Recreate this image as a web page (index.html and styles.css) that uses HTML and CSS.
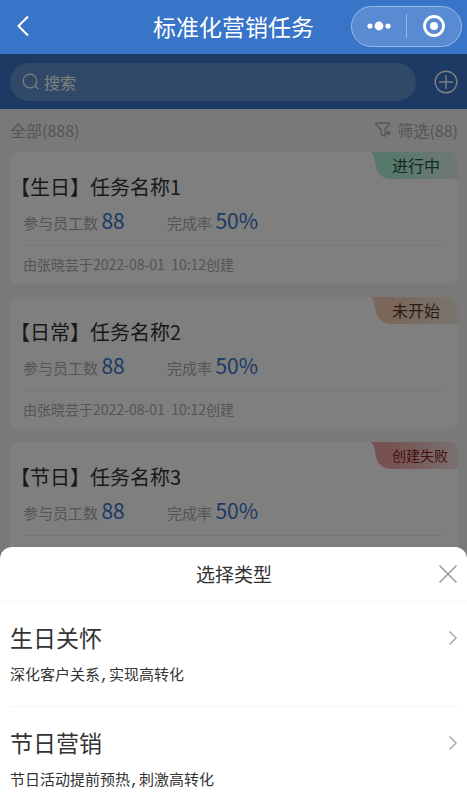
FILE: index.html
```html
<!DOCTYPE html>
<html lang="zh-CN">
<head>
<meta charset="utf-8">
<meta name="viewport" content="width=device-width, initial-scale=1">
<title>标准化营销任务</title>
<link rel="stylesheet" href="styles.css">
</head>
<body>
<header class="navbar">
  <button class="icon-btn back" type="button" aria-label="返回">
    <svg width="14" height="22" viewBox="0 0 14 22"><path d="M12 1.5 2.5 11 12 20.500" fill="none" stroke="#fff" stroke-width="2"/></svg>
  </button>
  <h1 class="navbar-title">标准化营销任务</h1>
  <div class="capsule">
    <button class="icon-btn capsule-btn" type="button" aria-label="更多">
      <svg width="24" height="10" viewBox="0 0 24 10" fill="#fff"><circle cx="3" cy="5" r="2.600"/><circle cx="12" cy="5" r="4.400"/><circle cx="21" cy="5" r="2.600"/></svg>
    </button>
    <span class="capsule-line"></span>
    <button class="icon-btn capsule-btn" type="button" aria-label="关闭小程序">
      <svg width="24" height="24" viewBox="0 0 24 24"><circle cx="12" cy="12" r="9.500" fill="none" stroke="#fff" stroke-width="2.800"/><circle cx="12" cy="12" r="4" fill="#fff"/></svg>
    </button>
  </div>
</header>
<div class="screen">
  <main class="page">
    <div class="search-bar">
      <label class="search-field">
        <svg width="18" height="18" viewBox="0 0 18 18" fill="none" stroke="#fff" stroke-width="1.200"><circle cx="8" cy="8" r="6.800"/><path d="m13 13 3.500 3"/></svg>
        <input class="search-input" type="search" placeholder="搜索" aria-label="搜索">
      </label>
      <button class="icon-btn" type="button" aria-label="新建任务">
        <svg width="24" height="24" viewBox="0 0 24 24" fill="none" stroke="#fff" stroke-width="1.400"><circle cx="12" cy="12" r="10.800"/><path d="M12 5v14M5 12h14"/></svg>
      </button>
    </div>
    <div class="filter-bar">
      <span>全部(888)</span>
      <button class="filter-btn" type="button">
        <svg width="16" height="16" viewBox="0 0 16 16" fill="none" stroke="#aaa" stroke-width="1.300"><path d="M10 14.500 6 12.300V7.500L1 2.500V1h13.500v1.500L10 7v7.500"/><path d="M11 11h4.500M12 9.200l2.800 3.600M14.800 9.200 12 12.800"/></svg>
        筛选(88)
      </button>
    </div>
    <ul class="task-list">
      <li class="task">
        <span class="badge badge-active"><svg class="badge-edge" width="22" height="27" viewBox="0 0 22 27"><path d="M0 0h22v27C11 27 6.500 20 5.500 13S4 1.500 0 0Z" fill="#aff0d8"/></svg><span class="badge-text">进行中</span></span>
        <h2 class="task-name">【生日】任务名称1</h2>
        <div class="stats"><span class="stat">参与员工数 <b class="num">88</b></span><span class="stat">完成率 <b class="num">50%</b></span></div>
        <p class="meta">由张晓芸于2022-08-01&nbsp; 10:12创建</p>
      </li>
      <li class="task">
        <span class="badge badge-pending"><svg class="badge-edge" width="22" height="27" viewBox="0 0 22 27"><path d="M0 0h22v27C11 27 6.500 20 5.500 13S4 1.500 0 0Z" fill="#f5cfb5"/></svg><span class="badge-text">未开始</span></span>
        <h2 class="task-name">【日常】任务名称2</h2>
        <div class="stats"><span class="stat">参与员工数 <b class="num">88</b></span><span class="stat">完成率 <b class="num">50%</b></span></div>
        <p class="meta">由张晓芸于2022-08-01&nbsp; 10:12创建</p>
      </li>
      <li class="task">
        <span class="badge badge-failed"><svg class="badge-edge" width="22" height="27" viewBox="0 0 22 27"><path d="M0 0h22v27C11 27 6.500 20 5.500 13S4 1.500 0 0Z" fill="#f0a5a5"/></svg><span class="badge-text">创建失败</span></span>
        <h2 class="task-name">【节日】任务名称3</h2>
        <div class="stats"><span class="stat">参与员工数 <b class="num">88</b></span><span class="stat">完成率 <b class="num">50%</b></span></div>
      </li>
    </ul>
  </main>
  <div class="mask"></div>
  <section class="sheet" role="dialog" aria-labelledby="sheet-title">
    <header class="sheet-head">
      <h2 class="sheet-title" id="sheet-title">选择类型</h2>
      <button class="icon-btn sheet-close" type="button" aria-label="关闭">
        <svg width="20" height="20" viewBox="0 0 20 20"><path d="m1.500 1.500 17 17M18.500 1.500l-17 17" stroke="#999" stroke-width="1.500"/></svg>
      </button>
    </header>
    <a class="option" href="#birthday">
      <span class="option-text"><strong class="option-name">生日关怀</strong><span class="option-desc">深化客户关系,实现高转化</span></span>
      <svg class="arrow" width="10" height="16" viewBox="0 0 10 16"><path d="m1.500 1.500 6.500 6.500-6.500 6.500" fill="none" stroke="#aaa" stroke-width="1.500"/></svg>
    </a>
    <a class="option" href="#festival">
      <span class="option-text"><strong class="option-name">节日营销</strong><span class="option-desc">节日活动提前预热,刺激高转化</span></span>
      <svg class="arrow" width="10" height="16" viewBox="0 0 10 16"><path d="m1.500 1.500 6.500 6.500-6.500 6.500" fill="none" stroke="#aaa" stroke-width="1.500"/></svg>
    </a>
  </section>
</div>
</body>
</html>
```
FILE: styles.css
```css
* { box-sizing: border-box; margin: 0; padding: 0; }

body {
  display: flex;
  flex-direction: column;
  height: 100vh;
  overflow: hidden;
  font-family: "Noto Sans CJK SC", sans-serif;
  color: #333;
}

button, input { font: inherit; color: inherit; border: 0; background: none; }
svg { display: block; flex: none; }
h1, h2, strong { font-weight: 400; }
.icon-btn { display: flex; align-items: center; justify-content: center; }

.navbar {
  display: grid;
  grid-template-columns: 1fr auto 1fr;
  align-items: center;
  height: 54px;
  padding: 0 5px 2px;
  background: #3875c8;
  color: #fff;
  flex: none;
}
.back { justify-self: start; padding: 0 11px; }
.navbar-title { font-size: 23px; line-height: 32px; }
.capsule {
  justify-self: end;
  display: flex;
  align-items: center;
  width: 111px;
  height: 41px;
  border: 1px solid #9bbae3;
  border-radius: 21px;
  background: #588bd1;
}
.capsule-btn { flex: 1; }
.capsule-line { width: 1px; height: 24px; background: #9bbae3; }

.screen { position: relative; flex: 1; min-height: 0; overflow: hidden; background: #f2f2f2; }

.search-bar {
  display: flex;
  align-items: center;
  gap: 18px;
  height: 55px;
  padding: 0 9px 0 10px;
  background: #3875c8;
  color: #fff;
}
.search-field {
  flex: 1;
  display: flex;
  align-items: center;
  gap: 4px;
  height: 38px;
  padding: 0 12px;
  border-radius: 19px;
  background: #6193d0;
}
.search-input { flex: 1; min-width: 0; font-size: 16px; line-height: 24px; outline: 0; }
.search-input::placeholder { color: #fff; opacity: 1; }

.filter-bar {
  display: flex;
  align-items: center;
  justify-content: space-between;
  height: 43px;
  padding: 0 9px 2px 10px;
  font-size: 16px;
  color: #aaa;
}
.filter-btn { display: flex; align-items: center; gap: 6px; }

.task-list { display: grid; gap: 13px; padding: 0 9px 0 10px; list-style: none; }
.task { position: relative; height: 132px; padding-top: 20px; border-radius: 8px; background: #fff; overflow: hidden; }
.task-name { font-size: 20px; line-height: 30px; }
.stats {
  display: grid;
  grid-template-columns: 144px 1fr;
  margin: 3px 13px 0;
  padding-bottom: 4px;
  border-bottom: 1px solid #eee;
}
.stat { font-size: 15px; line-height: 36px; color: #aaa; }
.num { font-size: 21px; line-height: 24px; font-weight: 400; color: #3875c8; }
.meta { margin: 8px 13px 0; font-size: 14px; line-height: 21px; color: #aaa; }

.badge { position: absolute; top: 0; right: 0; display: flex; width: 88px; height: 27px; font-size: 16px; }
.badge-text { flex: 1; line-height: 27px; white-space: nowrap; }
.badge-active { color: #1c5a46; }
.badge-active .badge-text { background: linear-gradient(90deg, #aff0d8, #e0f0ea); }
.badge-pending { color: #5a3a1e; }
.badge-pending .badge-text { background: linear-gradient(90deg, #f5cfb5, #f2ebe0); }
.badge-failed { color: #8c1e1e; font-size: 14px; }
.badge-failed .badge-text { background: linear-gradient(90deg, #f0a5a5, #f2e2e2); }

.mask { position: absolute; inset: 0; background: rgba(0, 0, 0, 0.5); }

.sheet { position: absolute; left: 0; right: 0; bottom: 0; border-radius: 12px 12px 0 0; background: #fff; }
.sheet-head {
  display: grid;
  grid-template-columns: 1fr auto 1fr;
  align-items: center;
  height: 55px;
  padding: 0 9px 0 10px;
  border-bottom: 1px solid #f5f5f5;
}
.sheet-title { grid-column: 2; font-size: 19px; line-height: 28px; }
.sheet-close { justify-self: end; }
.option {
  display: flex;
  justify-content: space-between;
  height: 105px;
  margin: 0 9px 0 10px;
  padding-top: 19px;
  border-bottom: 1px solid #f5f5f5;
  color: inherit;
  text-decoration: none;
}
.option:last-child { height: 97px; border-bottom: 0; }
.option-text { display: flex; flex-direction: column; gap: 12px; }
.option-name { font-size: 23px; line-height: 32px; }
.option-desc { font-family: "Liberation Mono", "Noto Sans CJK SC", sans-serif; font-size: 15px; line-height: 24px; }
.arrow { margin-top: 9px; }
```
